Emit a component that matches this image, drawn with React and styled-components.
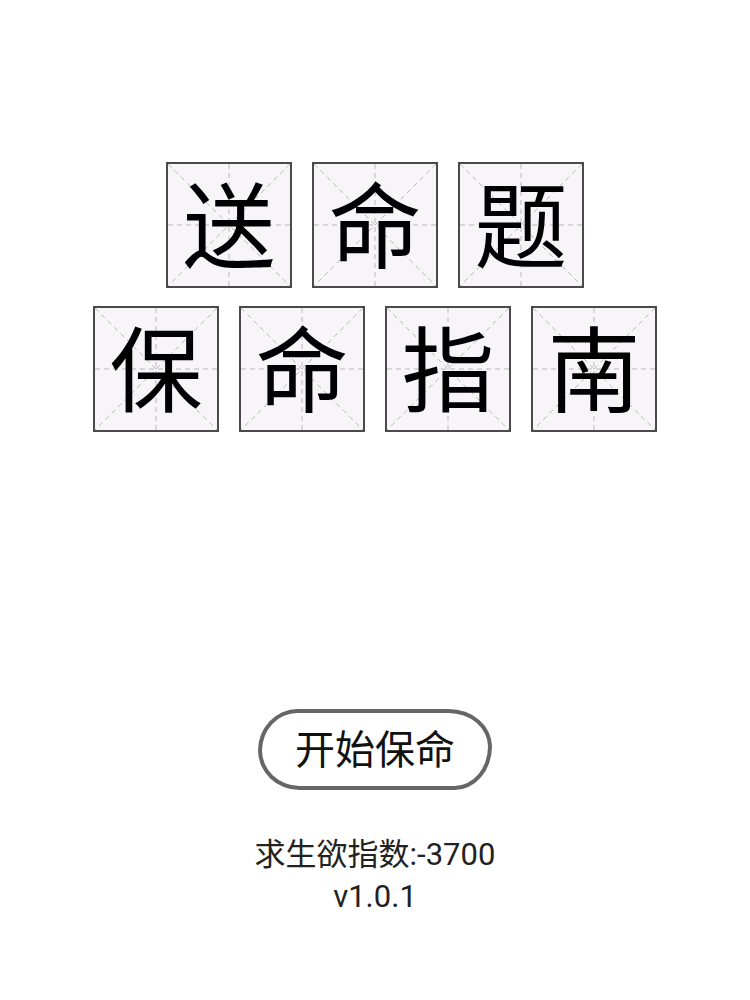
import styled, { createGlobalStyle } from 'styled-components'

const GlobalStyle = createGlobalStyle`
    html, body {
        margin: 0;
        padding: 0;
        background: #ffffff;
    }
    body {
        font-family: Roboto, "Noto Sans CJK SC", sans-serif;
    }
`

const Page = styled.div`
    width: 750px;
    height: 1000px;
    display: flex;
    flex-direction: column;
    align-items: center;
    padding-top: 162px;
    box-sizing: border-box;
`

const Title = styled.div`
    display: flex;
    flex-direction: column;
    align-items: center;
    gap: 18px;
`

const Row = styled.div`
    display: flex;
    gap: 20px;
`

const Cell = styled.div`
    position: relative;
    width: 126px;
    height: 126px;
    box-sizing: border-box;
    border: 2px solid #4a4a4a;
    background: #f7f5f7;
    display: flex;
    align-items: center;
    justify-content: center;

    svg{
        position: absolute;
        inset: 0;
        width: 100%;
        height: 100%;
    }
    span{
        position: relative;
        top: -5px;
        font-family: "Noto Sans CJK SC", sans-serif;
        font-size: 93px;
        line-height: 1;
        color: #000;
    }
`

const StartButton = styled.button`
    margin-top: 277px;
    width: 234px;
    height: 81px;
    box-sizing: border-box;
    border: 4px solid #666;
    border-radius: 40px 44px 38px 42px / 42px 38px 44px 40px;
    background: #fff;
    font-family: "Noto Sans CJK SC", sans-serif;
    font-size: 40px;
    color: #111;
    display: flex;
    align-items: center;
    justify-content: center;
    padding: 0 0 5px;
    cursor: pointer;
`

const Info = styled.div`
    margin-top: 44px;
    display: flex;
    flex-direction: column;
    align-items: center;
    color: #222;
    font-family: Roboto, "Noto Sans CJK SC", sans-serif;
    font-size: 31px;
    line-height: 42px;
`

const Grid = () => (
    <svg viewBox="0 0 122 122" preserveAspectRatio="none">
        <g stroke="#b9b9b9" strokeWidth="1" strokeDasharray="5 4" fill="none">
            <line x1="0" y1="0" x2="122" y2="122" />
            <line x1="122" y1="0" x2="0" y2="122" />
            <line x1="61" y1="0" x2="61" y2="122" />
            <line x1="0" y1="61" x2="122" y2="61" />
        </g>
    </svg>
)

const Char = ({ c }) => (
    <Cell>
        <Grid />
        <span>{c}</span>
    </Cell>
)

const App = () => {
    return <>
        <GlobalStyle />
        <Page>
            <Title>
                <Row>
                    {['送', '命', '题'].map((c, i) => <Char key={i} c={c} />)}
                </Row>
                <Row>
                    {['保', '命', '指', '南'].map((c, i) => <Char key={i} c={c} />)}
                </Row>
            </Title>
            <StartButton>开始保命</StartButton>
            <Info>
                <div>求生欲指数:-3700</div>
                <div>v1.0.1</div>
            </Info>
        </Page>
    </>
}

export default App
